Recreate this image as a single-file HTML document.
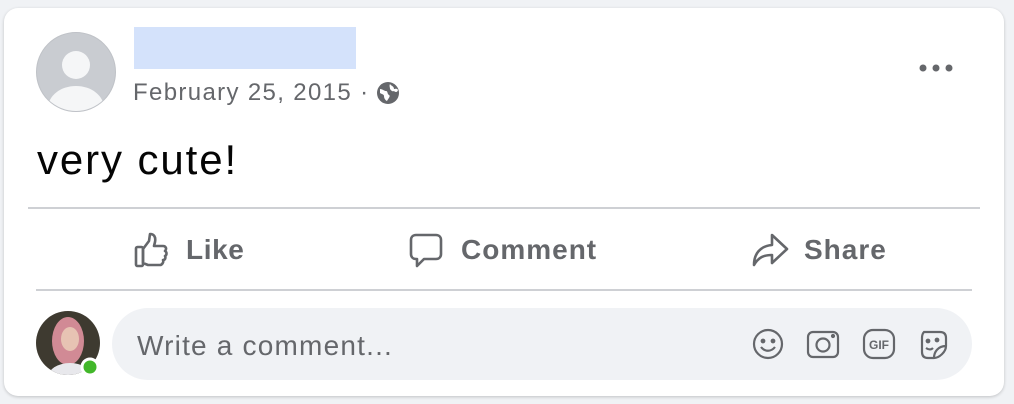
<!DOCTYPE html>
<html><head><style>
*{margin:0;padding:0;box-sizing:border-box}
body{width:1014px;height:404px;background:#f0f2f5;font-family:"Liberation Sans",sans-serif;position:relative;overflow:hidden}
.card{position:absolute;left:4px;top:8px;width:1000px;height:388px;background:#fff;border-radius:14px;box-shadow:0 1px 3px rgba(0,0,0,.2)}
.a{position:absolute;white-space:nowrap}
.act{position:absolute;top:232px;font-size:28px;font-weight:bold;color:#65676b;display:flex;align-items:center;gap:14px;letter-spacing:0.6px}
</style></head><body>
<div class="card"></div>
<svg class="a" style="left:36px;top:32px" width="80" height="80" viewBox="0 0 80 80">
<defs><clipPath id="c"><circle cx="40" cy="40" r="39"/></clipPath></defs>
<circle cx="40" cy="40" r="39.5" fill="#c9ccd1" stroke="#bfc2c7"/>
<g clip-path="url(#c)" fill="#f5f6f7"><circle cx="40" cy="33" r="14"/><ellipse cx="40" cy="76" rx="28" ry="22"/></g>
</svg>
<div class="a" style="left:134px;top:27px;width:222px;height:42px;background:#d4e2fb"></div>
<div class="a" style="left:133px;top:79px;font-size:24px;letter-spacing:1.35px;color:#65676b">February 25, 2015 ·</div>
<svg class="a" style="left:376px;top:81px" width="24" height="24" viewBox="0 0 24 24"><circle cx="12" cy="12" r="11" fill="#65676b"/><path d="M4 8c3 0 4 2 6 2s1 3 3 4-1 4-2 6c-2-1-3-3-3-5s-3-2-4-3zM14 3c1 2 4 2 4 5 1 0 3-1 4 1-1 3-3 2-4 1-2 1-3-1-4-2 0-2-1-3 0-5z" fill="#fff"/></svg>
<svg class="a" style="left:918px;top:62px" width="36" height="12"><circle cx="5" cy="6" r="3.5" fill="#65676b"/><circle cx="18" cy="6" r="3.5" fill="#65676b"/><circle cx="31" cy="6" r="3.5" fill="#65676b"/></svg>
<div class="a" style="left:37px;top:136px;font-size:42px;letter-spacing:1.9px;color:#050505">very cute!</div>
<div class="a" style="left:28px;top:207px;width:952px;height:2px;background:#ced0d4"></div>
<div class="act" style="left:134px"><svg width="38" height="36" viewBox="0 0 38 36" fill="none" stroke="#65676b" stroke-width="2.6" stroke-linejoin="round"><rect x="2" y="15" width="7" height="19" rx="1.5"/><path d="M9 17l6-8 1-7c4 0 6 3 5 8l-1 4h9c3 0 4 3 2 5 2 1 2 4 0 5 1 2 0 4-2 4 1 2-1 5-3 5H14l-5-2z"/></svg>Like</div>
<div class="act" style="left:408px;gap:17px;letter-spacing:1px"><svg width="36" height="36" viewBox="0 0 36 36" fill="none" stroke="#65676b" stroke-width="2.6" stroke-linejoin="round"><path d="M8 3h20c3 0 5 2 5 5v14c0 3-2 5-5 5H16l-7 7v-7H8c-3 0-5-2-5-5V8c0-3 2-5 5-5z"/></svg>Comment</div>
<div class="act" style="left:752px;letter-spacing:1px"><svg width="38" height="36" viewBox="0 0 38 36" fill="none" stroke="#65676b" stroke-width="2.6" stroke-linejoin="round"><path d="M20 3l15 14-15 14v-8C11 23 6 26 2 33c0-11 6-19 18-20z"/></svg>Share</div>
<div class="a" style="left:36px;top:289px;width:936px;height:2px;background:#ced0d4"></div>
<svg class="a" style="left:36px;top:311px" width="66" height="66" viewBox="0 0 66 66">
<defs><clipPath id="d"><circle cx="32" cy="32" r="32"/></clipPath></defs>
<g clip-path="url(#d)"><rect width="66" height="66" fill="#3e3a30"/><ellipse cx="32" cy="30" rx="16" ry="24" fill="#d18a95"/><ellipse cx="34" cy="28" rx="9" ry="12" fill="#e7c3b3"/><ellipse cx="34" cy="66" rx="22" ry="14" fill="#e8e8ec"/></g>
<circle cx="54" cy="56" r="8" fill="#42b72a" stroke="#fff" stroke-width="3"/>
</svg>
<div class="a" style="left:112px;top:308px;width:860px;height:72px;border-radius:36px;background:#f0f2f5"></div>
<div class="a" style="left:137px;top:330px;font-size:28px;letter-spacing:1.2px;color:#65676b">Write a comment...</div>
<svg class="a" style="left:750px;top:326px" width="200" height="36" viewBox="0 0 200 36" fill="none" stroke="#65676b" stroke-width="2.2">
<circle cx="18" cy="18" r="14"/><circle cx="13" cy="15" r="1.3" fill="#65676b"/><circle cx="23" cy="15" r="1.3" fill="#65676b"/><path d="M11 21c4 5 10 5 14 0"/>
<rect x="58" y="6" width="30" height="25" rx="5"/><circle cx="73" cy="19" r="6.5"/><circle cx="83" cy="10" r="1" fill="#65676b"/>
<rect x="114" y="4" width="30" height="28" rx="9"/><text x="129" y="23" font-size="12" font-family="Liberation Sans" fill="#65676b" stroke="none" text-anchor="middle" font-weight="bold">GIF</text>
<path d="M174 6h16c4 0 6 2 6 6v8c0 6-7 12-12 12h-6c-4 0-6-2-6-6V12c0-4 2-6 2-6zM184 32c0-6 4-12 12-12"/><circle cx="178" cy="15" r="1.3" fill="#65676b"/><circle cx="187" cy="14" r="1.3" fill="#65676b"/><path d="M176 22c3 2 5 2 7 0"/>
</svg>
</body></html>
